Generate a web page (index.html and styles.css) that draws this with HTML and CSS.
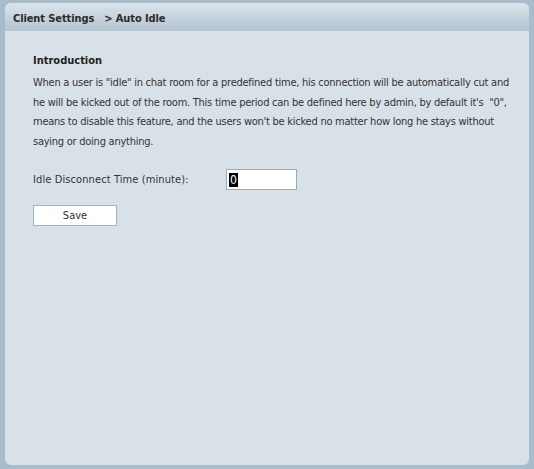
FILE: index.html
```html
<!DOCTYPE html>
<html>
<head>
<meta charset="utf-8">
<link rel="stylesheet" href="styles.css">
</head>
<body>
<div class="panel">
  <div class="header">Client Settings&nbsp;&nbsp; &gt; Auto Idle</div>
  <div class="content">
    <h3 class="title">Introduction</h3>
    <p class="intro">When a user is "idle" in chat room for a predefined time, his connection will be automatically cut and he will be kicked out of the room. This time period can be defined here by admin, by default it's&nbsp; "0", means to disable this feature, and the users won't be kicked no matter how long he stays without saying or doing anything.</p>
    <div class="row">
      <span class="label">Idle Disconnect Time (minute):</span>
      <div class="input"><span class="sel">0</span></div>
    </div>
    <button class="save">Save</button>
  </div>
</div>
</body>
</html>
```
FILE: styles.css
```css
html, body { margin: 0; padding: 0; }
body {
  background: #a9bccb;
  width: 534px;
  height: 469px;
  overflow: hidden;
  font-family: "DejaVu Sans Condensed", "DejaVu Sans", sans-serif;
  font-size: 11px;
  color: #333;
}
.panel {
  margin: 3px 5px 0 5px;
  height: 462px;
  background: #d9e1e8;
  border-radius: 6px;
  overflow: hidden;
}
.header {
  height: 28px;
  line-height: 31px;
  padding-left: 8px;
  font-weight: bold;
  font-size: 11px;
  letter-spacing: -0.1px;
  color: #2b2b2b;
  background: linear-gradient(#dbe3ea, #b3c4d1);
}
.content { padding: 20px 0 0 28px; }
.title {
  margin: 0;
  font-size: 11px;
  font-weight: bold;
  color: #222;
  line-height: 19px;
}
.intro {
  margin: 3px 0 0 0;
  width: 482px;
  line-height: 19.5px;
  letter-spacing: -0.25px;
  color: #333;
}
.row {
  display: flex;
  align-items: center;
  margin-top: 18px;
}
.label { width: 193px; letter-spacing: 0.1px; }
.input {
  background: #fff;
  border: 1px solid #9aabb9;
  display: flex;
  align-items: center;
  padding-left: 2px;
  box-sizing: border-box;
  width: 71px;
  height: 21px;
}
.sel {
  background: #000;
  color: #fff;
  font-size: 12px;
  line-height: 14px;
  padding: 0 1px;
}
.save {
  display: block;
  margin-top: 15px;
  width: 84px;
  height: 21px;
  background: #fff;
  border: 1px solid #a4b3c1;
  font-family: inherit;
  font-size: 11px;
  color: #333;
  padding: 0;
}
```
